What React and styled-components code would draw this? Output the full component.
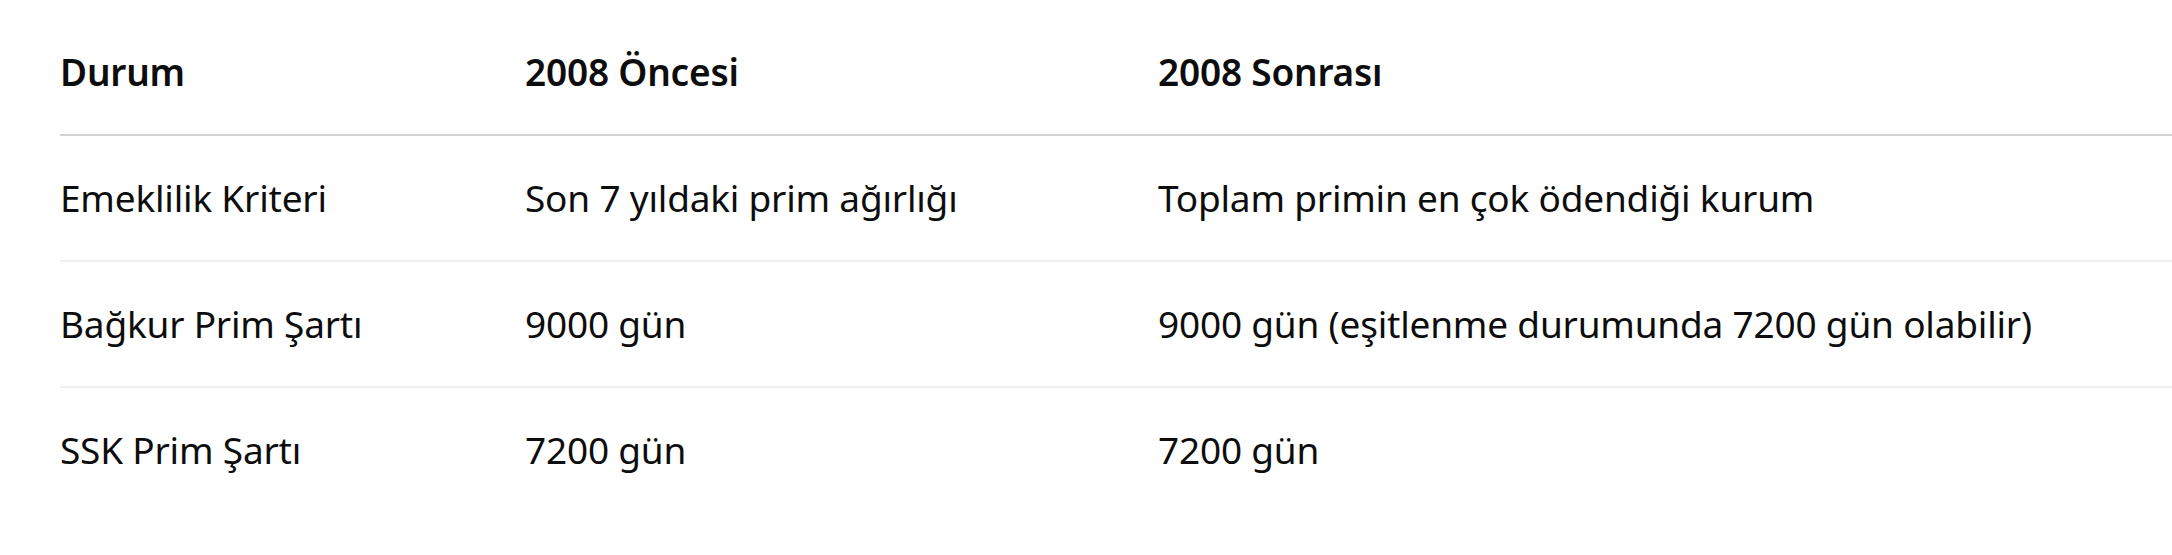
import styled, { createGlobalStyle } from 'styled-components';

const GlobalStyle = createGlobalStyle`
  html, body {
    margin: 0;
    padding: 0;
    background: #ffffff;
  }
  body {
    font-family: "Noto Sans", "Open Sans", sans-serif;
    color: #0d0d0d;
  }
`;

const rows = [
  ['Emeklilik Kriteri', 'Son 7 yıldaki prim ağırlığı', 'Toplam primin en çok ödendiği kurum'],
  ['Bağkur Prim Şartı', '9000 gün', '9000 gün (eşitlenme durumunda 7200 gün olabilir)'],
  ['SSK Prim Şartı', '7200 gün', '7200 gün'],
];

function App() {
  return (
    <>
      <GlobalStyle />
      <Page>
        <Table>
          <Row $head>
            <Cell $head>Durum</Cell>
            <Cell $head>2008 Öncesi</Cell>
            <Cell $head>2008 Sonrası</Cell>
          </Row>
          {rows.map((r, i) => (
            <Row key={i} $last={i === rows.length - 1}>
              {r.map((c, j) => (
                <Cell key={j}>{c}</Cell>
              ))}
            </Row>
          ))}
        </Table>
      </Page>
    </>
  );
}

export default App;

const Page = styled.div`
  width: 2172px;
  height: 555px;
  overflow: hidden;
  padding: 10px 0 0 60px;
  box-sizing: border-box;
`;

const Table = styled.div`
  display: flex;
  flex-direction: column;
  width: 2112px;
`;

const Row = styled.div`
  display: grid;
  grid-template-columns: 465px 633px 1fr;
  align-items: center;
  height: 124px;
  border-bottom: 2px solid ${p => (p.$head ? '#d2d2d2' : p.$last ? 'transparent' : '#f0f0f0')};
`;

const Cell = styled.div`
  font-size: 37px;
  font-weight: ${p => (p.$head ? 600 : 400)};
  line-height: 1.3;
  white-space: nowrap;
  letter-spacing: -0.2px;
`;
